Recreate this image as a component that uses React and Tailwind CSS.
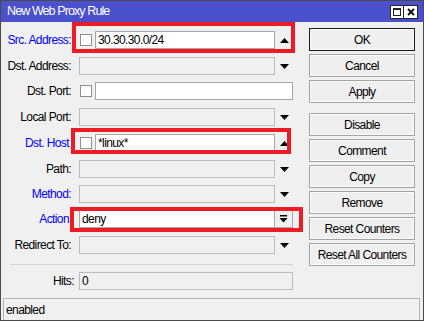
import React from 'react';

// Form rows of the rule dialog
const ROWS = [
    { label: 'Src. Address:', blue: true, check: true, value: '30.30.30.0/24', arrow: 'up', h: 'h-[26px]' },
    { label: 'Dst. Address:', arrow: 'down', h: 'h-[25px]' },
    { label: 'Dst. Port:', check: true, value: '', h: 'h-[26px]' },
    { label: 'Local Port:', arrow: 'down', h: 'h-[26px]' },
    { label: 'Dst. Host', blue: true, check: true, value: '*linux*', arrow: 'up', h: 'h-[26px]' },
    { label: 'Path:', arrow: 'down', h: 'h-[25px]' },
    { label: 'Method:', blue: true, arrow: 'down', h: 'h-[25px]' },
    { label: 'Action', blue: true, value: 'deny', select: true, h: 'h-[26px]' },
    { label: 'Redirect To:', arrow: 'down', h: 'h-[18px]' },
];

const BUTTONS_TOP = ['OK', 'Cancel', 'Apply'];
const BUTTONS_BOTTOM = ['Disable', 'Comment', 'Copy', 'Remove', 'Reset Counters', 'Reset All Counters'];

const Arrow = ({ dir }) => (
    <div className="w-[18px] h-[18px] flex items-center justify-center">
        <svg width="9" height="5" viewBox="0 0 9 5">
            {dir === 'up'
                ? <polygon points="0,5 4.5,0 9,5" fill="#000" />
                : <polygon points="0,0 9,0 4.5,5" fill="#000" />}
        </svg>
    </div>
);

const Row = ({ row }) => (
    <div className={`flex items-start ${row.h}`}>
        <div className={`w-[70px] h-[18px] flex items-center justify-end ${row.label.endsWith(':') ? '' : 'pr-[2px]'} ${row.blue ? 'text-[#0000ff]' : 'text-black'}`}>
            {row.label}
        </div>
        <div className="ml-[8px] w-[214px] h-[18px] flex">
            {row.check && (
                <div className="flex items-center ml-[1px] mr-[3px]">
                    <div className="w-[12px] h-[12px] bg-white border border-[#8f8f8f]" />
                </div>
            )}
            {row.value !== undefined ? (
                <div className="flex-1 h-[18px] bg-white border border-[#a6a6a6] flex items-center px-[2px] text-black">
                    {row.value}
                </div>
            ) : (
                <div className="flex-1 h-[18px] border border-[#bcbcbc]" />
            )}
            {row.arrow && <Arrow dir={row.arrow} />}
            {row.select && (
                <div className="w-[18px] h-[18px] border border-[#a6a6a6] border-l-0 bg-[#f0f0f0] flex items-center justify-center">
                    <svg width="9" height="8" viewBox="0 0 9 8">
                        <rect x="1" y="0" width="7" height="1.5" fill="#000" />
                        <polygon points="0.5,3 8.5,3 4.5,7.5" fill="#000" />
                    </svg>
                </div>
            )}
        </div>
    </div>
);

const Button = ({ label }) => (
    <div className={`h-[23px] flex items-center justify-center bg-[#efefef] border ${label === 'OK' ? 'border-[#1a1a1a]' : 'border-[#a3a3a3]'} shadow-[inset_0_0_0_1px_#fbfbfb] text-black`}>
        {label}
    </div>
);

export default function App() {
    return (
        <div
            className="relative w-[424px] h-[321px] border border-[#4a4a4a] bg-[#f0f0f0] flex flex-col text-[12px] tracking-[-0.6px] leading-none"
            style={{ fontFamily: '"Liberation Sans", Arial, sans-serif' }}
        >
            {/* Title bar */}
            <div className="h-[21px] bg-[#4b50cd] flex items-center pl-[6px] pr-[5px]">
                <div className="flex-1 text-white text-[12.5px] tracking-[-0.9px]">New Web Proxy Rule</div>
                <div className="flex">
                    <div className="w-[14px] h-[14px] bg-white border border-[#222] flex items-center justify-center">
                        <div className="w-[8px] h-[8px] border border-[#222] border-t-2" />
                    </div>
                    <div className="w-[14px] h-[14px] bg-white border border-[#222] border-l-0 flex items-center justify-center">
                        <svg width="8" height="8" viewBox="0 0 8 8">
                            <path d="M1 1 L7 7 M7 1 L1 7" stroke="#111" strokeWidth="2" />
                        </svg>
                    </div>
                </div>
            </div>

            {/* Body */}
            <div className="h-[276px] flex">
                <div className="w-[292px] pt-[9px] flex flex-col">
                    {ROWS.map(r => <Row key={r.label} row={r} />)}
                    <div className="mt-[10px] ml-[9px] h-[1px] bg-[#d4d4d4]" />
                    <div className="mt-[7px] flex items-start">
                        <div className="w-[73px] h-[18px] flex items-center justify-end text-black">Hits:</div>
                        <div className="ml-[5px] w-[214px] h-[18px] border border-[#bcbcbc] flex items-center px-[2px] text-black">0</div>
                    </div>
                </div>
                <div className="ml-[16px] w-[106px] pt-[6px] flex flex-col gap-[3px]">
                    {BUTTONS_TOP.map(b => <Button key={b} label={b} />)}
                    <div className="h-[4px]" />
                    {BUTTONS_BOTTOM.map(b => <Button key={b} label={b} />)}
                </div>
            </div>

            {/* Status bar */}
            <div className="h-[22px] ml-[2px] mr-[3px] border border-b-0 border-[#b4b4b4] flex items-center pl-[2px] text-black">
                enabled
            </div>

            {/* Red highlight annotations */}
            <div className="absolute left-[71px] top-[21px] w-[223px] h-[31px] border-4 border-[#ed1c24]" />
            <div className="absolute left-[70px] top-[127px] w-[220px] h-[26px] border-4 border-[#ed1c24]" />
            <div className="absolute left-[69px] top-[206px] w-[233px] h-[25px] border-4 border-[#ed1c24]" />
        </div>
    );
}
